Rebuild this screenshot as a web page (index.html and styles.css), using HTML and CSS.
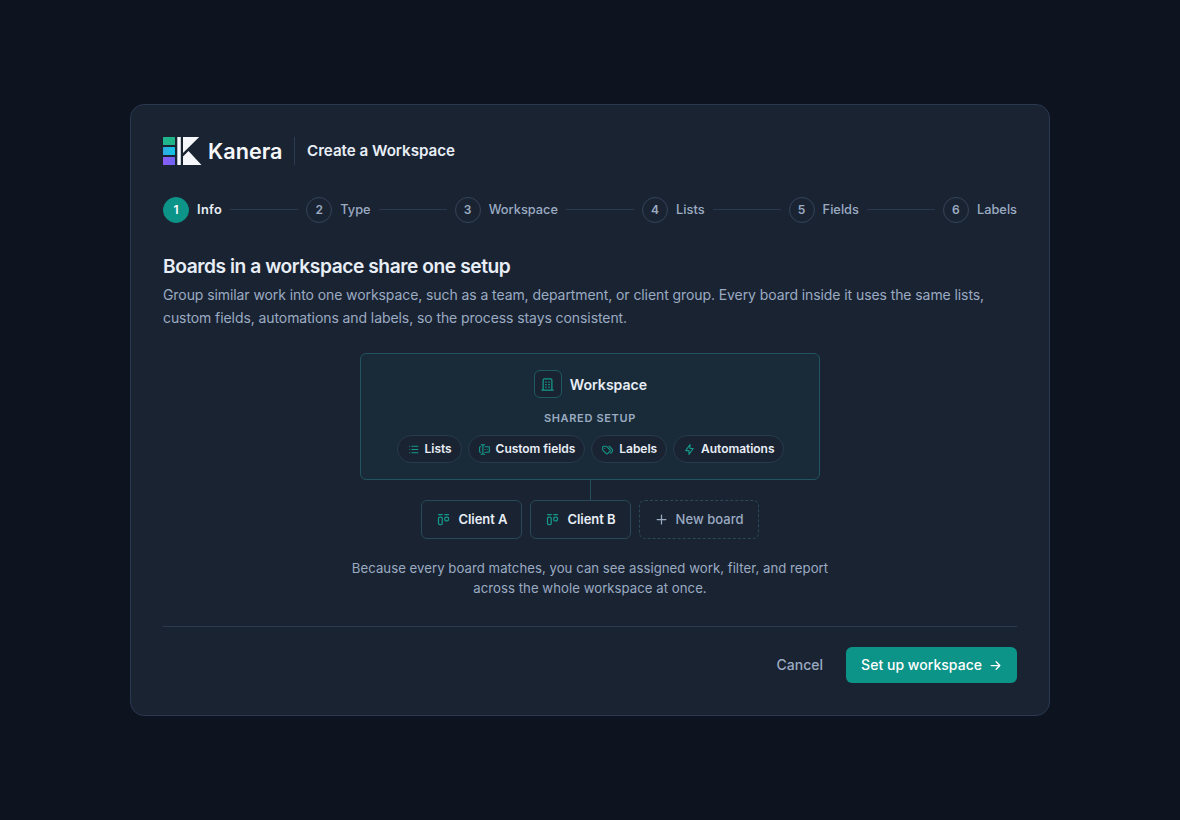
FILE: index.html
```html
<!DOCTYPE html>
<html lang="en">
<head>
<meta charset="utf-8">
<title>Create a Workspace</title>
<link rel="stylesheet" href="styles.css">
</head>
<body>
<svg class="defs" width="0" height="0">
  <symbol id="building" viewBox="0 0 24 24"><path d="M3 21h18M9 8h1M9 12h1M9 16h1M14 8h1M14 12h1M14 16h1M5 21v-16a2 2 0 0 1 2 -2h10a2 2 0 0 1 2 2v16"/></symbol>
  <symbol id="list" viewBox="0 0 24 24"><path d="M9 6h11M9 12h11M9 18h11M5 6v.01M5 12v.01M5 18v.01"/></symbol>
  <symbol id="forms" viewBox="0 0 24 24"><path d="M12 3a3 3 0 0 0 -3 3v12a3 3 0 0 0 3 3M6 3a3 3 0 0 1 3 3v12a3 3 0 0 1 -3 3M13 7h7a1 1 0 0 1 1 1v8a1 1 0 0 1 -1 1h-7M5 7h-1a1 1 0 0 0 -1 1v8a1 1 0 0 0 1 1h1M17 12h.01M13 12h.01"/></symbol>
  <symbol id="tags" viewBox="0 0 24 24"><path d="M3 8v4.172a2 2 0 0 0 .586 1.414l5.71 5.71a2.41 2.41 0 0 0 3.408 0l3.592 -3.592a2.41 2.41 0 0 0 0 -3.408l-5.71 -5.71a2 2 0 0 0 -1.414 -.586h-4.172a2 2 0 0 0 -2 2zM18 19l1.592 -1.592a4.82 4.82 0 0 0 0 -6.816l-4.592 -4.592M7 10h-.01"/></symbol>
  <symbol id="bolt" viewBox="0 0 24 24"><path d="M13 3v7h6l-8 11v-7h-6l8 -11"/></symbol>
  <symbol id="kanban" viewBox="0 0 24 24"><path d="M4 4h6M14 4h6M4 10a2 2 0 0 1 2 -2h2a2 2 0 0 1 2 2v8a2 2 0 0 1 -2 2h-2a2 2 0 0 1 -2 -2zM14 10a2 2 0 0 1 2 -2h2a2 2 0 0 1 2 2v2a2 2 0 0 1 -2 2h-2a2 2 0 0 1 -2 -2z"/></symbol>
  <symbol id="plus" viewBox="0 0 24 24"><path d="M12 5v14M5 12h14"/></symbol>
  <symbol id="arrow" viewBox="0 0 24 24"><path d="M5 12h14M13 18l6 -6M13 6l6 6"/></symbol>
</svg>
<main class="card">
  <header class="head">
    <svg class="logo" width="119" height="28" viewBox="0 0 119 28" role="img" aria-label="Kanera">
      <defs>
        <linearGradient id="g1"><stop offset="0" stop-color="#1fb78f"/><stop offset="1" stop-color="#20b486"/></linearGradient>
        <linearGradient id="g2"><stop offset="0" stop-color="#2fa9e0"/><stop offset="1" stop-color="#14c4e4"/></linearGradient>
        <linearGradient id="g3"><stop offset="0" stop-color="#8b5cf6"/><stop offset="1" stop-color="#6d64f0"/></linearGradient>
      </defs>
      <rect width="12" height="8" rx=".6" fill="url(#g1)"/>
      <rect y="10" width="12" height="8" rx=".6" fill="url(#g2)"/>
      <rect y="20" width="12" height="8" rx=".6" fill="url(#g3)"/>
      <path fill="#f5f7fa" d="M14.300 0h3.500v28h-3.500zM20 0h16.200L20 16zM20 28V19.500l5.500-5.500L38.500 28z"/>
      <text class="wordmark" x="45" y="21.500" textLength="74.500" lengthAdjust="spacingAndGlyphs">Kanera</text>
    </svg>
    <span class="divider"></span>
    <h1 class="title">Create a Workspace</h1>
  </header>
  <nav class="steps">
    <div class="step active"><span class="num">1</span><span class="label">Info</span></div><i class="line"></i>
    <div class="step"><span class="num">2</span><span class="label">Type</span></div><i class="line"></i>
    <div class="step"><span class="num">3</span><span class="label">Workspace</span></div><i class="line"></i>
    <div class="step"><span class="num">4</span><span class="label">Lists</span></div><i class="line"></i>
    <div class="step"><span class="num">5</span><span class="label">Fields</span></div><i class="line"></i>
    <div class="step"><span class="num">6</span><span class="label">Labels</span></div>
  </nav>
  <h2 class="heading">Boards in a workspace share one setup</h2>
  <p class="lead">Group similar work into one workspace, such as a team, department, or client group. Every board inside it uses the same lists, custom fields, automations and labels, so the process stays consistent.</p>
  <section class="diagram">
    <div class="workspace">
      <div class="ws-name"><span class="ws-icon"><svg class="icon i15"><use href="#building"/></svg></span>Workspace</div>
      <div class="shared">Shared setup</div>
      <div class="chips">
        <span class="chip"><svg class="icon i13"><use href="#list"/></svg><span class="label">Lists</span></span>
        <span class="chip"><svg class="icon i13"><use href="#forms"/></svg><span class="label">Custom fields</span></span>
        <span class="chip"><svg class="icon i13"><use href="#tags"/></svg><span class="label">Labels</span></span>
        <span class="chip"><svg class="icon i13"><use href="#bolt"/></svg><span class="label">Automations</span></span>
      </div>
    </div>
    <div class="stem"></div>
    <div class="boards">
      <div class="board"><svg class="icon i15"><use href="#kanban"/></svg><span class="label">Client A</span></div>
      <div class="board"><svg class="icon i15"><use href="#kanban"/></svg><span class="label">Client B</span></div>
      <div class="board new"><svg class="icon i15"><use href="#plus"/></svg><span class="label">New board</span></div>
    </div>
    <p class="note">Because every board matches, you can see assigned work, filter, and report across the whole workspace at once.</p>
  </section>
  <footer class="foot">
    <button class="btn ghost"><span class="label">Cancel</span></button>
    <button class="btn primary"><span class="label">Set up workspace</span><svg class="icon i15"><use href="#arrow"/></svg></button>
  </footer>
</main>
</body>
</html>
```
FILE: styles.css
```css
* { box-sizing: border-box; }
body {
  margin: 0;
  min-height: 100vh;
  display: flex;
  align-items: center;
  justify-content: center;
  background: #0d131f;
  color: #e8eef6;
  font-family: Inter, "Liberation Sans", sans-serif;
}
h1, h2, p { margin: 0; }
.defs { position: absolute; }
.card {
  width: 920px;
  height: 612px;
  padding: 32px;
  background: #1a2332;
  border: 1px solid #2a3850;
  border-radius: 14px;
}
.head { display: flex; align-items: center; gap: 12px; height: 28px; }
.logo { display: block; overflow: visible; }
.wordmark { font: 600 21.2px Inter, sans-serif; fill: #f5f7fa; }
.divider { width: 1px; height: 28px; background: #2d3b50; }
.title { padding-bottom: 1px; font-size: 15.2px; font-weight: 600; letter-spacing: -.04px; }
.label { padding-bottom: 2px; }
.steps { display: flex; align-items: center; gap: 8px; margin-top: 32px; }
.step { display: flex; align-items: center; gap: 8px; font-size: 12.8px; font-weight: 500; color: #9babc2; }
.num {
  width: 26px;
  height: 26px;
  display: grid;
  place-items: center;
  padding-bottom: 1px;
  border: 1px solid #34435a;
  border-radius: 50%;
  font-size: 12px;
  font-weight: 600;
}
.active { color: #e8eef6; font-weight: 600; letter-spacing: .35px; }
.active .num { background: #0d9488; border-color: #0d9488; color: #fff; letter-spacing: 0; }
.line { flex: 1; height: 1px; margin-bottom: 1px; background: #2a3850; }
.heading { margin-top: 31px; font-size: 19.2px; line-height: 25px; font-weight: 600; letter-spacing: -.44px; }
.lead { margin-top: 4px; font-size: 14px; line-height: 23px; letter-spacing: -.084px; color: #9babc2; }
.diagram { display: flex; flex-direction: column; align-items: center; margin-top: 24px; }
.workspace {
  width: 460px;
  height: 127px;
  padding-top: 16px;
  display: flex;
  flex-direction: column;
  align-items: center;
  background: #192b39;
  border: 1px solid #225360;
  border-radius: 6px;
}
.icon { fill: none; stroke: #14998a; stroke-width: 2; stroke-linecap: round; stroke-linejoin: round; flex: none; }
.i15 { width: 15px; height: 15px; }
.i13 { width: 13px; height: 13px; }
.ws-name { display: flex; align-items: center; gap: 8px; margin-left: 1px; font-size: 14.08px; font-weight: 600; }
.ws-icon { width: 28px; height: 28px; display: grid; place-items: center; background: #1a2332; border: 1px solid #1f5a62; border-radius: 6px; }
.shared { margin-top: 13px; font-size: 11px; line-height: 14px; font-weight: 600; letter-spacing: .66px; text-transform: uppercase; color: #9babc2; }
.chips { display: flex; gap: 6px; margin-top: 10px; margin-left: 1px; }
.chip { display: flex; align-items: center; gap: 5px; height: 28px; padding: 0 9px; background: #1a2332; border: 1px solid #263b4c; border-radius: 14px; font-size: 12px; font-weight: 600; letter-spacing: -.04px; }
.stem { width: 1px; height: 20px; background: #264f5d; }
.boards { display: flex; gap: 8px; }
.board { display: flex; align-items: center; gap: 7px; height: 39px; padding: 0 14px; border: 1px solid #284957; border-radius: 6px; font-size: 13px; font-weight: 600; letter-spacing: -.04px; }
.new { border-style: dashed; color: #9babc2; font-weight: 500; letter-spacing: .04px; }
.new .icon { stroke: #9babc2; }
.note { width: 490px; margin-top: 19px; font-size: 13.2px; line-height: 20px; letter-spacing: .03px; color: #9babc2; text-align: center; }
.foot { display: flex; justify-content: flex-end; gap: 8px; margin-top: 28px; padding-top: 20px; border-top: 1px solid #2a3850; }
.btn { height: 36px; padding: 0 15px; display: flex; align-items: center; gap: 6px; border: 0; border-radius: 6px; font: 500 14px Inter, sans-serif; background: none; color: #9babc2; }
.primary { padding-right: 14px; background: #0d9488; color: #fff; letter-spacing: .03px; }
.primary .icon { stroke: #fff; }
```
